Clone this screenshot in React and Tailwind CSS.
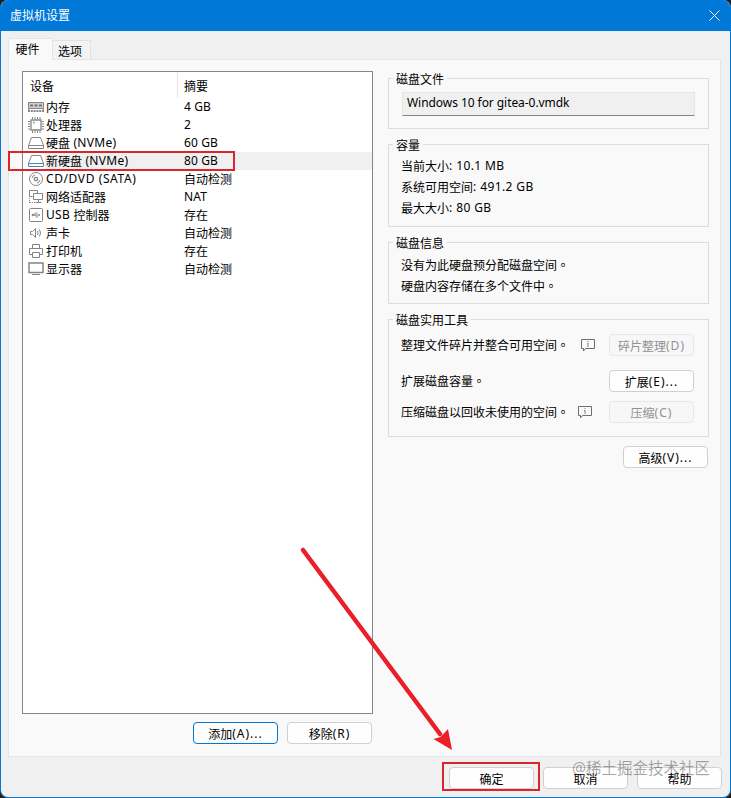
import React from "react";

const svgProps = {
  width: 16,
  height: 16,
  viewBox: "0 0 16 16",
  fill: "none",
  stroke: "#858585",
  strokeWidth: 1,
};

const MemoryIcon = () => (
  <svg {...svgProps}>
    <path d="M0.500 3.500h15v6h-15z" fill="#d0d0d0" />
    <path d="M2 5.500h3v2H2zM6.500 5.500h3v2h-3zM11 5.500h3v2h-3z" fill="#777" stroke="none" />
    <path d="M0.500 9.500v3M15.500 9.500v3" />
    <path d="M0 12h16" strokeDasharray="2 0.800" strokeWidth="2" />
  </svg>
);

const CpuIcon = () => (
  <svg {...svgProps}>
    <path d="M3 3h10v10H3z" strokeWidth="1.300" />
    <path d="M4 1h9M4 15h9M1 4v9M15 4v9" strokeDasharray="1 1.500" strokeWidth="2" />
    <path d="M5 5.500h1.500" strokeWidth="1.500" />
  </svg>
);

const DiskIcon = ({ accent = "#858585" }) => (
  <svg {...svgProps}>
    <path d="M0.500 10.500l3-8h9l3 8" />
    <path d="M0.500 10.500h15v3h-15z" stroke={accent} />
  </svg>
);

const CdIcon = () => (
  <svg {...svgProps}>
    <circle cx="8" cy="8" r="6.500" />
    <circle cx="8" cy="8" r="1.700" strokeWidth="1.300" />
    <path d="M4 7A4 4 0 0 1 7 4M12 9A4 4 0 0 1 9 12" />
  </svg>
);

const NetworkIcon = () => (
  <svg {...svgProps}>
    <path d="M4.500 7.500h-3v-6h8v3M5.500 4.500h9v6h-9zM7.500 13.500h6M10.500 10.500v3" />
    <path d="M1.500 9v5M2 13.500h5" strokeDasharray="1 1" />
  </svg>
);

const UsbIcon = () => (
  <svg {...svgProps}>
    <rect x="1.500" y="1.500" width="13" height="13" rx="1" />
    <path d="M4 8h8M6 8l1.500-2h2M7 8l1.500 2h1.500" />
    <circle cx="4.800" cy="8" r="0.800" fill="#858585" />
    <path d="M11 7v2" />
  </svg>
);

const SoundIcon = () => (
  <svg {...svgProps}>
    <path d="M2.500 6.500h2l3-3v9l-3-3h-2zM9.500 6q1 2 0 4M11.500 4.500q2 3.500 0 7" />
  </svg>
);

const PrinterIcon = () => (
  <svg {...svgProps}>
    <path d="M4.500 5.500v-4h7v4M4.500 11.500h-3v-6h13v6h-3M4.500 9.500h7v5h-7z" />
  </svg>
);

const DisplayIcon = () => (
  <svg {...svgProps}>
    <path d="M1 2h14v9.500H1z" strokeWidth="1.500" />
    <path d="M4 13.500h8" />
  </svg>
);

const InfoIcon = () => (
  <svg width="15" height="13" viewBox="0 0 15 13" fill="none" stroke="#697070">
    <path d="M0.500 0.500h13v9h-9l-2 2.500v-2.500h-2z" />
    <path d="M7 2v1M7 4v4M6 4.500h1" stroke="#858585" />
  </svg>
);

// Latin runs are spaced wider, Chinese runs sit one pixel lower
const Text = ({ children, latin = "tracking-[0.4px]" }) =>
  children.split(/([\u4e00-\u9fff]+|。)/).filter(Boolean).map((run, i) => {
    if (run === "。") {
      return <span key={i} className="align-[-1px] font-['Noto_Sans_CJK_TC',sans-serif] leading-[0]">{run}</span>;
    }
    if (/[\u4e00-\u9fff]/.test(run)) {
      return <span key={i} className="align-[-1px] leading-[0]">{run}</span>;
    }
    return <span key={i} className={`whitespace-pre ${latin}`}>{run}</span>;
  });

const devices = [
  { name: "内存", summary: "4 GB", icon: <MemoryIcon /> },
  { name: "处理器", summary: "2", icon: <CpuIcon /> },
  { name: "硬盘 (NVMe)", summary: "60 GB", icon: <DiskIcon /> },
  { name: "新硬盘 (NVMe)", summary: "80 GB", icon: <DiskIcon accent="#4a86b8" />, selected: true },
  { name: "CD/DVD (SATA)", summary: "自动检测", icon: <CdIcon /> },
  { name: "网络适配器", summary: "NAT", icon: <NetworkIcon /> },
  { name: "USB 控制器", summary: "存在", icon: <UsbIcon /> },
  { name: "声卡", summary: "自动检测", icon: <SoundIcon /> },
  { name: "打印机", summary: "存在", icon: <PrinterIcon /> },
  { name: "显示器", summary: "自动检测", icon: <DisplayIcon /> },
];

const Button = ({ children, primary, disabled }) => {
  let look = "border-[#d0d0d0] bg-[#fefefe] rounded";
  if (primary) look = "border-[#0078d4] bg-[#fefefe] rounded";
  if (disabled) look = "border-[#e8e8e8] bg-[#f7f7f7] text-[#919191] rounded-sm";
  return (
    <button className={`flex h-[22px] w-[85px] shrink-0 items-center justify-center border pt-0.5 ${look}`}>
      <span>
        <Text latin="tracking-[1px]">{children}</Text>
      </span>
    </button>
  );
};

const Group = ({ title, className, children }) => (
  <div className={`border border-[#dcdcdc] ${className}`}>
    <div className="-mt-2 ml-1 flex h-4 items-center">
      <span className="bg-[#f9f9f9] px-[3px] leading-4">
        <Text>{title}</Text>
      </span>
    </div>
    {children}
  </div>
);

const App = () => {
  return (
    <div className="h-[798px] w-[731px] overflow-hidden bg-[#202020]">
      <div className="relative flex h-full flex-col overflow-hidden rounded-lg border border-t-0 border-[#0078d7] bg-[#f0f0f0] font-['Noto_Sans','Noto_Sans_CJK_SC',sans-serif] text-[12px] leading-[18px] text-black">
        {/* Title bar */}
        <header className="flex h-[31px] shrink-0 items-center justify-between bg-[#0078d7] pr-2.5 pl-[9px] text-white">
          <span>虚拟机设置</span>
          <svg width="11" height="11" viewBox="0 0 11 11" stroke="white" fill="none">
            <path d="M0.500 0.500l10 10M10.500 0.500l-10 10" />
          </svg>
        </header>

        {/* Tabs */}
        <nav className="flex h-7 shrink-0 items-end pl-[7px]">
          <div className="z-10 -mb-px flex h-[22px] w-[45px] items-center justify-center border border-b-0 border-[#e5e5e5] bg-[#f9f9f9] pr-1.5">
            硬件
          </div>
          <div className="flex h-[19px] w-[38px] items-center justify-center border border-b-0 border-l-0 border-[#e2e2e2] bg-[#f3f3f3] pt-1 pr-[3px]">
            选项
          </div>
        </nav>

        <main className="ml-[7px] flex h-[698px] w-[713px] shrink-0 border border-[#e5e5e5] bg-[#f9f9f9] pt-[11px] pl-[13px]">
          {/* Device list */}
          <section className="w-[351px] shrink-0">
            <div className="h-[643px] border border-[#868686] bg-white">
              <div className="flex h-[26px]">
                <div className="w-[155px] border-r border-[#e5e5e5] pt-1.5 pl-[7px]">设备</div>
                <div className="pt-1.5 pl-1.5">摘要</div>
              </div>
              {devices.map((d) => (
                <div key={d.name} className="flex h-[18px] items-center pl-[5px]">
                  {d.icon}
                  <div className={`ml-px flex h-full flex-1 items-center pl-px ${d.selected ? "bg-[#f0f0f0]" : ""}`}>
                    <span className="w-[138px] whitespace-nowrap">
                      <Text latin={d.name.startsWith("CD") ? "tracking-[0.6px]" : "tracking-[0.3px]"}>{d.name}</Text>
                    </span>
                    <span>
                      <Text latin="tracking-[0.1px]">{d.summary}</Text>
                    </span>
                  </div>
                </div>
              ))}
            </div>
            <div className="mt-2 flex justify-end gap-[9px] pr-px">
              <Button primary>添加(A)...</Button>
              <Button>移除(R)</Button>
            </div>
          </section>

          {/* Details */}
          <section className="mt-[7px] ml-[15px] w-[321px]">
            <Group title="磁盘文件" className="h-[51px]">
              <div className="mt-[5px] ml-[13px] h-[24px] w-[293px] border border-[#e5e5e5] border-b-[#868686] bg-[#f0f0f0] pl-1 leading-5 tracking-[-0.06px]">
                Windows 10 for gitea-0.vmdk
              </div>
            </Group>

            <Group title="容量" className="mt-[15px] h-[83px]">
              <div className="mt-0.5 pl-3 leading-[21px]">
                <p><Text>当前大小: 10.1 MB</Text></p>
                <p><Text>系统可用空间: 491.2 GB</Text></p>
                <p><Text>最大大小: 80 GB</Text></p>
              </div>
            </Group>

            <Group title="磁盘信息" className="mt-[15px] h-[62px]">
              <div className="mt-[3px] pl-3 leading-[21px]">
                <p><Text>没有为此硬盘预分配磁盘空间。</Text></p>
                <p><Text>硬盘内容存储在多个文件中。</Text></p>
              </div>
            </Group>

            <Group title="磁盘实用工具" className="mt-[15px] h-[118px]">
              <div className="mt-1.5 flex h-[22px] items-center pr-3.5 pl-3">
                <span className="w-[180px]"><Text>整理文件碎片并整合可用空间。</Text></span>
                <InfoIcon />
                <span className="ml-auto"><Button disabled>碎片整理(D)</Button></span>
              </div>
              <div className="mt-3.5 flex h-[22px] items-center pr-3.5 pl-3">
                <span><Text>扩展磁盘容量。</Text></span>
                <span className="ml-auto"><Button>扩展(E)...</Button></span>
              </div>
              <div className="mt-[9px] flex h-[22px] items-center pr-3.5 pl-3">
                <span className="w-[177px]"><Text>压缩磁盘以回收未使用的空间。</Text></span>
                <InfoIcon />
                <span className="ml-auto"><Button disabled>压缩(C)</Button></span>
              </div>
            </Group>

            <div className="mt-[9px] flex justify-end pr-px">
              <Button>高级(V)...</Button>
            </div>
          </section>
        </main>

        <footer className="mt-[10px] flex justify-end gap-[9px] pr-2">
          <Button>确定</Button>
          <Button>取消</Button>
          <Button>帮助</Button>
        </footer>

        {/* Annotations */}
        <div className="absolute top-[151px] left-[7px] h-5 w-[227px] border-2 border-[#d9262b]" />
        <div className="absolute top-[762px] left-[441px] h-[29px] w-[98px] border-2 border-[#d9262b]" />
        <svg className="absolute top-[540px] left-[290px]" width="170" height="215" viewBox="0 0 170 215">
          <path d="M12 10L149 194" stroke="#ea1f27" strokeWidth="4.500" strokeLinecap="round" />
          <path d="M161 210L142.500 199L149.500 197L157 189z" fill="#ea1f27" />
        </svg>
        <div className="absolute top-[757px] left-[571px] text-[15.500px] leading-[22px] whitespace-nowrap text-black/35">
          @稀土掘金技术社区
        </div>
      </div>
    </div>
  );
};

export default App;
